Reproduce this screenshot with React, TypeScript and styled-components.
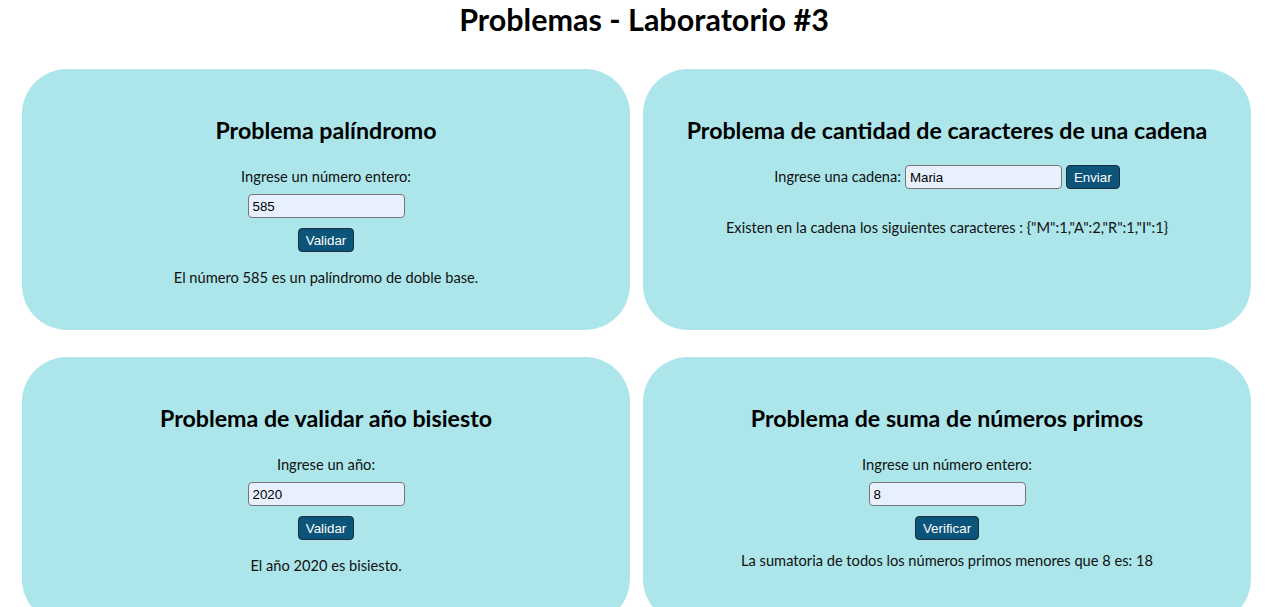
import React, { useState } from 'react'
import styled, { createGlobalStyle } from 'styled-components'

const GlobalStyle = createGlobalStyle`
  html, body {
    margin: 0;
    padding: 0;
    background: #ffffff;
  }
  body {
    font-family: "Segoe UI", Lato, "Liberation Sans", sans-serif;
    color: #000;
    overflow: hidden;
  }
`

const Page = styled.div`
  width: 1288px;
`

const MainTitle = styled.h1`
  margin: 0;
  height: 69px;
  line-height: 38px;
  font-size: 30.5px;
  font-weight: 700;
  text-align: center;
`

const Grid = styled.div`
  display: grid;
  grid-template-columns: 608px 608px;
  grid-template-rows: 261px 267px;
  column-gap: 13px;
  row-gap: 27px;
  padding-left: 22px;
`

const Card = styled.section`
  background: #ace6ea;
  border-radius: 45px;
  display: flex;
  flex-direction: column;
  align-items: center;
  padding-top: 45px;
  box-sizing: border-box;
`

const CardTitle = styled.h2`
  margin: 0;
  font-size: 23.2px;
  line-height: 32px;
  font-weight: 700;
`

const Label = styled.label`
  display: block;
  margin-top: 20px;
  font-size: 14.7px;
  line-height: 20px;
  color: #111;
`

const Inline = styled.div`
  margin-top: 19px;
  display: flex;
  align-items: center;
  gap: 4px;
  font-size: 14.6px;
  line-height: 20px;
  color: #111;
`

const Input = styled.input<{ $top?: number }>`
  box-sizing: border-box;
  width: 157px;
  height: 24px;
  margin: ${p => p.$top ?? 0}px 0 0;
  padding: 0 4px;
  border: 1px solid #767676;
  border-radius: 4px;
  background: #e8f0fe;
  font-family: Arial, "Liberation Sans", sans-serif;
  font-size: 13.33px;
  color: #000;

  &:focus {
    outline: none;
  }
`

const Button = styled.button<{ $top?: number }>`
  box-sizing: border-box;
  height: 24px;
  margin-top: ${p => p.$top ?? 0}px;
  padding: 0 7px;
  background: #0c5479;
  color: #fff;
  border: 1px solid #1d2c3a;
  border-radius: 4px;
  font-family: Arial, "Liberation Sans", sans-serif;
  font-size: 13.33px;
  cursor: pointer;
`

const Result = styled.p<{ $top: number }>`
  margin: ${p => p.$top}px 0 0;
  font-size: 14.65px;
  line-height: 20px;
  color: #111;
`

const App = () => {
  const [pal, setPal] = useState('585')
  const [cadena, setCadena] = useState('Maria')
  const [anio, setAnio] = useState('2020')
  const [primo, setPrimo] = useState('8')

  return (
    <Page>
      <GlobalStyle />
      <MainTitle>Problemas - Laboratorio #3</MainTitle>
      <Grid>
        <Card>
          <CardTitle>Problema palíndromo</CardTitle>
          <Label>Ingrese un número entero:</Label>
          <Input $top={8} value={pal} onChange={e => setPal(e.target.value)} />
          <Button $top={10}>Validar</Button>
          <Result $top={16}>El número 585 es un palíndromo de doble base.</Result>
        </Card>

        <Card>
          <CardTitle>Problema de cantidad de caracteres de una cadena</CardTitle>
          <Inline>
            <span>Ingrese una cadena:</span>
            <Input value={cadena} onChange={e => setCadena(e.target.value)} />
            <Button>Enviar</Button>
          </Inline>
          <Result $top={29}>
            Existen en la cadena los siguientes caracteres : {'{"M":1,"A":2,"R":1,"I":1}'}
          </Result>
        </Card>

        <Card>
          <CardTitle>Problema de validar año bisiesto</CardTitle>
          <Label>Ingrese un año:</Label>
          <Input $top={8} value={anio} onChange={e => setAnio(e.target.value)} />
          <Button $top={10}>Validar</Button>
          <Result $top={16}>El año 2020 es bisiesto.</Result>
        </Card>

        <Card>
          <CardTitle>Problema de suma de números primos</CardTitle>
          <Label>Ingrese un número entero:</Label>
          <Input $top={8} value={primo} onChange={e => setPrimo(e.target.value)} />
          <Button $top={10}>Verificar</Button>
          <Result $top={11}>La sumatoria de todos los números primos menores que 8 es: 18</Result>
        </Card>
      </Grid>
    </Page>
  )
}

export default App
